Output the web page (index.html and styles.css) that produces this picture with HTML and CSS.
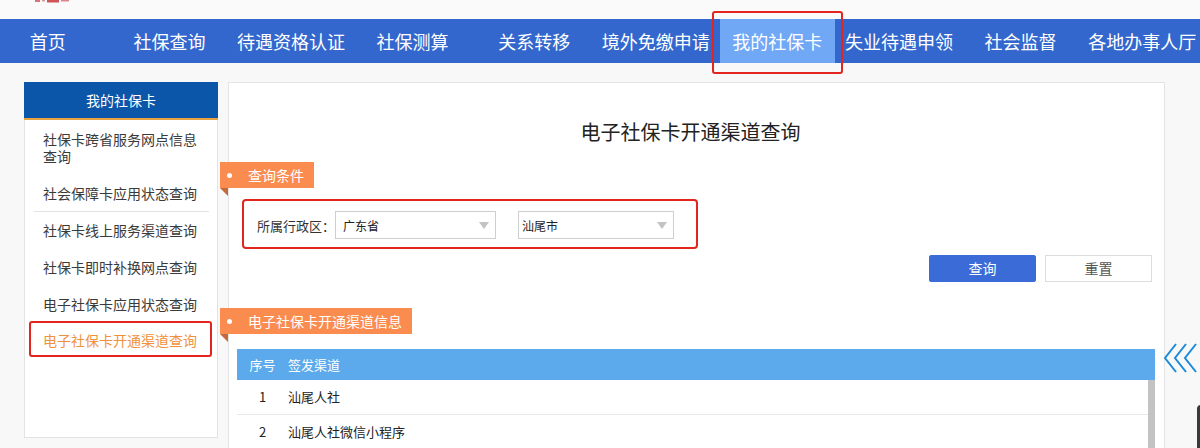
FILE: index.html
```html
<!DOCTYPE html>
<html lang="zh-CN">
<head>
<meta charset="utf-8">
<title>电子社保卡开通渠道查询</title>
<link rel="stylesheet" href="styles.css">
</head>
<body>
<div class="page">
  <header class="topbar">
    <svg class="logo" width="40" height="3" viewBox="0 0 40 3" aria-hidden="true">
      <rect x="0" y="0" width="5" height="2" fill="#d77476"/>
      <rect x="7" y="0" width="3" height="1.5" fill="#e09597"/>
      <rect x="12" y="0" width="12" height="2.5" fill="#cf5558"/>
      <rect x="26" y="0" width="8" height="1.5" fill="#dc8789"/>
    </svg>
  </header>

  <nav class="nav">
    <ul class="nav-list">
      <li class="nav-item"><a class="nav-link">首页</a></li>
      <li class="nav-item"><a class="nav-link">社保查询</a></li>
      <li class="nav-item"><a class="nav-link">待遇资格认证</a></li>
      <li class="nav-item"><a class="nav-link">社保测算</a></li>
      <li class="nav-item"><a class="nav-link">关系转移</a></li>
      <li class="nav-item"><a class="nav-link">境外免缴申请</a></li>
      <li class="nav-item"><a class="nav-link active">我的社保卡</a></li>
      <li class="nav-item"><a class="nav-link">失业待遇申领</a></li>
      <li class="nav-item"><a class="nav-link">社会监督</a></li>
      <li class="nav-item"><a class="nav-link">各地办事人厅</a></li>
    </ul>
  </nav>

  <div class="content">
    <aside class="sidebar">
      <div class="side-head">我的社保卡</div>
      <ul class="side-list">
        <li class="side-item">社保卡跨省服务网点信息查询</li>
        <li class="side-item">社会保障卡应用状态查询</li>
        <li class="side-divider"></li>
        <li class="side-item">社保卡线上服务渠道查询</li>
        <li class="side-item">社保卡即时补换网点查询</li>
        <li class="side-item">电子社保卡应用状态查询</li>
        <li class="side-item current">电子社保卡开通渠道查询</li>
      </ul>
    </aside>

    <main class="panel">
      <h1 class="title">电子社保卡开通渠道查询</h1>

      <div class="tag tag-first">查询条件</div>
      <div class="filter">
        <span class="filter-label">所属行政区：</span>
        <div class="select select-prov"><span class="select-text">广东省</span><i class="caret"></i></div>
        <div class="select select-city"><span class="select-text">汕尾市</span><i class="caret"></i></div>
      </div>

      <div class="actions">
        <button class="btn btn-primary">查询</button>
        <button class="btn btn-default">重置</button>
      </div>

      <div class="tag tag-second">电子社保卡开通渠道信息</div>

      <div class="table">
        <div class="thead">
          <div class="col-no">序号</div>
          <div class="col-name">签发渠道</div>
        </div>
        <div class="tbody">
          <div class="rows">
            <div class="row"><div class="col-no">1</div><div class="col-name">汕尾人社</div></div>
            <div class="row"><div class="col-no">2</div><div class="col-name">汕尾人社微信小程序</div></div>
          </div>
          <div class="scrollbar"></div>
        </div>
      </div>
    </main>
  </div>

  <div class="float-arrows" aria-hidden="true">
    <svg width="40" height="30" viewBox="0 0 40 30">
      <polyline points="13,1 2,15 13,29" fill="none" stroke="#1b8bd9" stroke-width="2"/>
      <polyline points="23,1 12,15 23,29" fill="none" stroke="#1b8bd9" stroke-width="2"/>
      <polyline points="33,1 22,15 33,29" fill="none" stroke="#1b8bd9" stroke-width="2"/>
    </svg>
  </div>
  <div class="float-dark" aria-hidden="true"></div>
</div>
</body>
</html>
```

FILE: styles.css
```css
* { box-sizing: border-box; }

html, body {
  margin: 0;
  padding: 0;
  overflow: hidden;
  background: #f8f8f8;
}

body {
  font-family: "Noto Sans CJK SC", "Noto Sans", sans-serif;
  color: #333;
}

.page {
  position: relative;
  width: 1200px;
  height: 448px;
  overflow: hidden;
}

ul { list-style: none; margin: 0; padding: 0; }

/* top strip */
.topbar {
  height: 19px;
  background: #fafafa;
  padding-left: 35px;
}
.logo { display: block; }

/* nav */
.nav {
  height: 44px;
  background: #3367cd;
}
.nav-list {
  display: flex;
  margin-left: -13px;
}
.nav-item {
  flex: 0 0 121.6px;
  display: flex;
  justify-content: center;
}
.nav-link {
  position: relative;
  display: block;
  width: 115px;
  height: 44px;
  line-height: 44px;
  text-align: center;
  font-size: 18px;
  color: #fff;
  white-space: nowrap;
}
.nav-link.active {
  background: #70a8f6;
}
.nav-link.active::after {
  content: "";
  position: absolute;
  left: -8px;
  right: -8px;
  top: -8px;
  bottom: -11px;
  border: 2px solid #e3251f;
  border-radius: 3px;
}

/* content */
.content {
  display: flex;
  align-items: flex-start;
  gap: 10px;
  padding: 19px 0 0 24px;
}

.sidebar {
  flex: 0 0 194px;
  height: 356px;
  background: #fff;
  border: 1px solid #e3e3e3;
  border-top: 0;
}
.side-head {
  height: 38px;
  line-height: 36px;
  background: #0c56a9;
  border-bottom: 2px solid #e9a441;
  color: #fff;
  font-size: 14px;
  text-align: center;
  margin: 0 -1px;
}
.side-list {
  padding-top: 1px;
}
.side-item {
  position: relative;
  padding: 10px 16px 9.7px 18px;
  font-size: 14px;
  line-height: 17px;
  color: #3a3a3a;
}
.side-divider {
  height: 1px;
  background: #e2e2e2;
  margin: 0 8px 0 9px;
}
.side-item.current {
  color: #f1913c;
}
.side-item.current::after {
  content: "";
  position: absolute;
  left: 4px;
  right: 5px;
  top: -1px;
  bottom: 2px;
  border: 2px solid #e3251f;
  border-radius: 3px;
}

/* main panel */
.panel {
  flex: 0 0 937px;
  min-width: 0;
  height: 380px;
  background: #fff;
  border: 1px solid #e4e4e4;
  border-bottom: 0;
  padding: 0 12px 0 0;
}

.title {
  margin: 37px 0 0;
  height: 24px;
  line-height: 24px;
  font-size: 20px;
  font-weight: normal;
  color: #222;
  text-align: center;
}

.tag {
  position: relative;
  width: fit-content;
  height: 26px;
  line-height: 26px;
  margin-left: -9px;
  padding: 0 10px 0 28px;
  background: #fa8c4f;
  color: #fff;
  font-size: 14px;
  white-space: nowrap;
}
.tag::before {
  content: "";
  position: absolute;
  left: 7px;
  top: 10.5px;
  width: 5px;
  height: 5px;
  border-radius: 50%;
  background: #fff;
}
.tag::after {
  content: "";
  position: absolute;
  left: 0;
  top: 100%;
  width: 0;
  height: 0;
  border-top: 8px solid #c4693c;
  border-left: 8px solid transparent;
}
.tag-first { margin-top: 18px; }
.tag-second { margin-top: 26px; }

.filter {
  display: flex;
  align-items: center;
  width: fit-content;
  margin: 11px 0 0 13px;
  padding: 10px 22px 8px 13px;
  border: 2px solid #e3251f;
  border-radius: 4px;
}
.filter-label {
  font-size: 13px;
  color: #333;
  width: 78px;
  white-space: nowrap;
}
.select {
  display: flex;
  align-items: center;
  justify-content: space-between;
  height: 28px;
  border: 1px solid #cfcfcf;
  background: #fff;
}
.select-prov { width: 161px; padding: 0 6px 0 7px; }
.select-city { width: 156px; margin-left: 22px; padding: 0 6px 0 3px; }
.select-text {
  font-size: 12px;
  color: #222;
}
.caret {
  width: 0;
  height: 0;
  border-left: 5px solid transparent;
  border-right: 5px solid transparent;
  border-top: 7px solid #c3c3c3;
}

.actions {
  display: flex;
  justify-content: flex-end;
  gap: 9px;
  margin-top: 6px;
}
.btn {
  width: 107px;
  height: 27px;
  padding: 0;
  font-family: inherit;
  font-size: 14px;
  line-height: 25px;
  cursor: pointer;
}
.btn-primary {
  background: #3a6bd6;
  border: 1px solid #3a6bd6;
  border-radius: 2px;
  color: #fff;
}
.btn-default {
  background: #fff;
  border: 1px solid #dcdcdc;
  color: #555;
}

/* table */
.table {
  width: 918px;
  margin: 15px 0 0 8px;
}
.thead {
  display: flex;
  height: 31px;
  line-height: 31px;
  background: #5caaeb;
  color: #fff;
  font-size: 13px;
}
.col-no {
  width: 51px;
  text-align: center;
}
.col-name {
  flex: 1;
}
.tbody {
  display: flex;
}
.rows {
  flex: 1;
}
.row {
  display: flex;
  height: 35px;
  line-height: 34px;
  border-bottom: 1px solid #e9e9e9;
  font-size: 13px;
  color: #222;
}
.scrollbar {
  flex: 0 0 7px;
  height: 80px;
  background: #c3c3c3;
}

/* floating widgets */
.float-arrows {
  position: absolute;
  left: 1163px;
  top: 343px;
  width: 40px;
  height: 30px;
}
.float-arrows svg { display: block; }
.float-dark {
  position: absolute;
  left: 1197px;
  top: 405px;
  width: 40px;
  height: 60px;
  background: #3a3a3a;
  border-radius: 4px;
}
```
